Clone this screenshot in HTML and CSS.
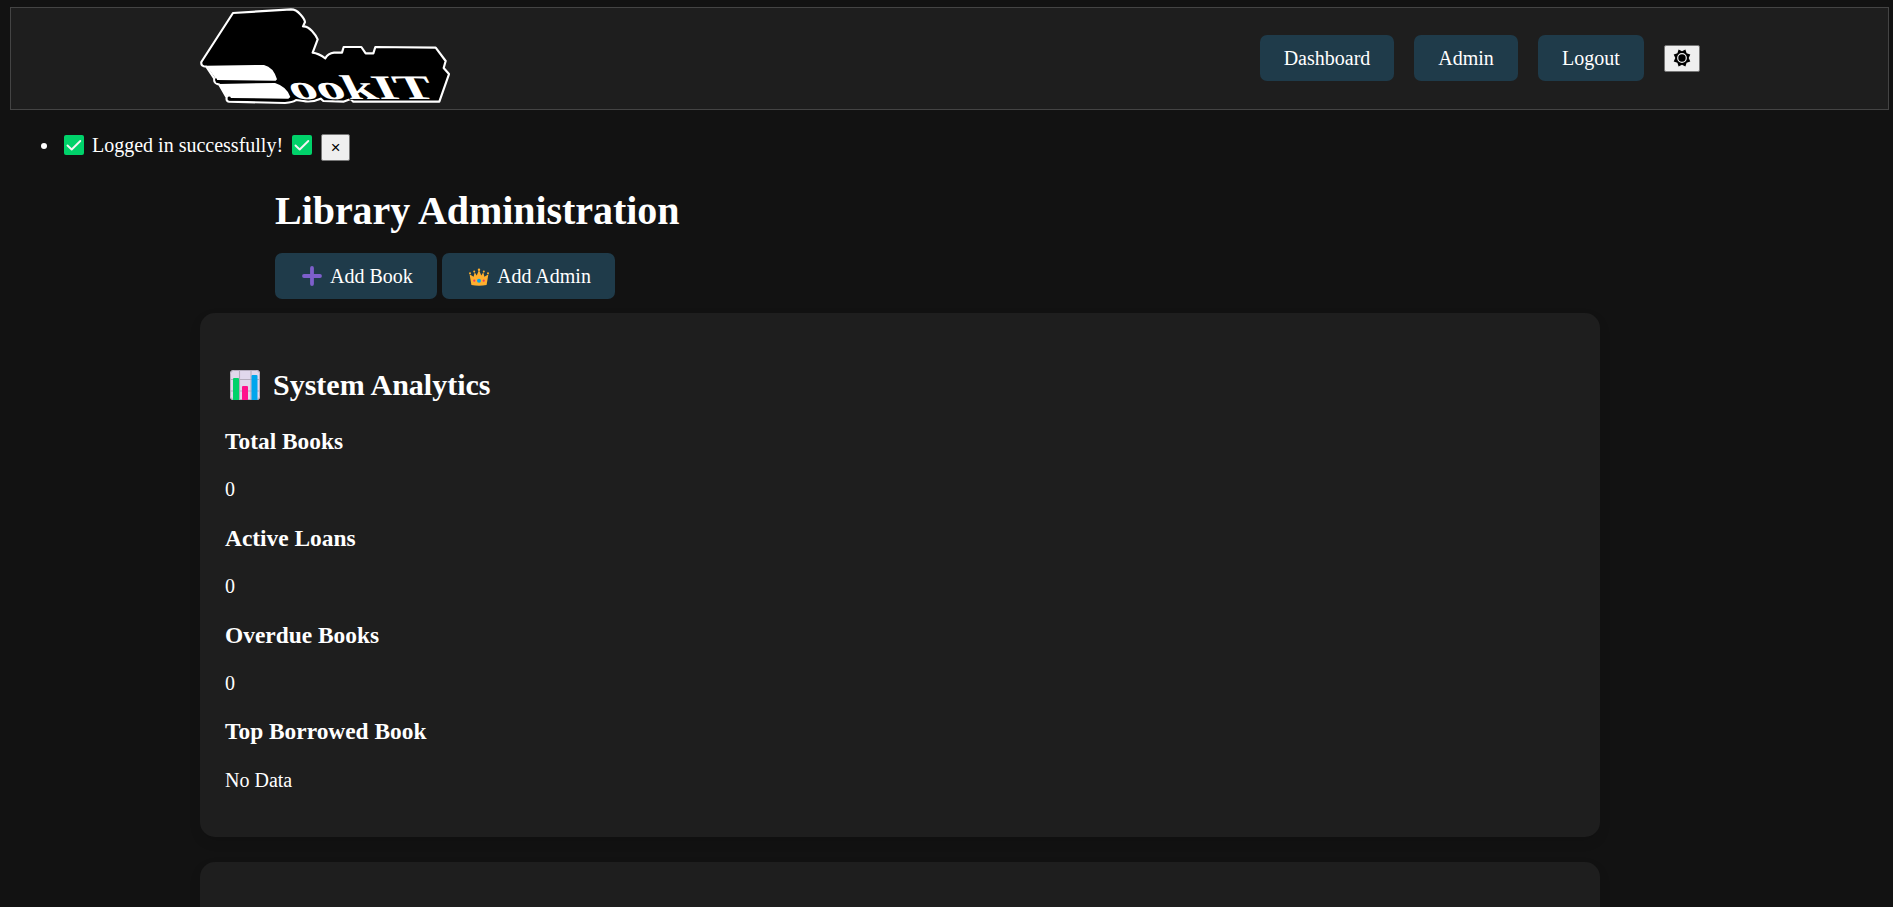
FILE: index.html
```html
<!DOCTYPE html>
<html lang="en">
<head>
<meta charset="utf-8">
<title>BookIT - Library Administration</title>
<link rel="stylesheet" href="styles.css">
</head>
<body>
<header class="header">
  <a class="logo" aria-label="BookIT">
    <svg width="250" height="100" viewBox="30 24 750 300">
      <path d="M129 39L303 28Q318 28 330 42Q344 57 345 66L339 79Q352 78 366 93Q378 106 383 118L368 158Q385 160 406 175Q414 160 432 158L456 158L461 141L514 141L527 160L550 160L556 141L737 143L767 183L761 204L777 222L748 305L490 305L482 297L460 305L400 303L392 296Q365 308 340 303L318 300Q310 307 285 309L117 305Q108 304 110 292L88 254Q70 250 73 236L49 200Q32 200 34 186Z" fill="#000" stroke="#fff" stroke-width="6.5" stroke-linejoin="round"/>
      <path d="M49 197L222 195Q250 201 261 238L257 242L80 240Z M86 252L255 249Q291 260 301 291L295 296L124 294Q114 288 112 292Z" fill="#fff"/>
      <path d="M78 236L80 246L258 246M118 290L120 299L285 301Q303 300 311 291" fill="none" stroke="#000" stroke-width="5"/>
      <text class="logo-text" transform="matrix(1.61 0 .5 1 311 296)">ookIT</text>
    </svg>
  </a>
  <nav class="nav">
    <a class="btn dash">Dashboard</a>
    <a class="btn admin">Admin</a>
    <a class="btn logout">Logout</a>
    <button class="theme" aria-label="Toggle theme">
      <svg width="18" height="18" viewBox="-9 -9 18 18">
        <path d="M-3.4-8.5L0-6.8L3.4-8.5L4.6-4.8L8.3-3.6L6.7 0L8.3 3.6L4.6 4.8L3.4 8.5L0 6.8L-3.4 8.5L-4.6 4.8L-8.3 3.6L-6.7 0L-8.3-3.6L-4.6-4.8Z" fill="#000"/>
        <circle r="4.3" fill="none" stroke="#efefef" stroke-width="1.2"/>
      </svg>
    </button>
  </nav>
</header>
<ul class="messages">
  <li class="message">
    <svg class="check" width="20" height="20" viewBox="0 0 20 20"><rect width="20" height="20" rx="2" fill="#00d26a"/><path d="M3.5 10.5L7.7 14.5L16.3 6" fill="none" stroke="#f4f4f4" stroke-width="1.9" stroke-linecap="round" stroke-linejoin="round"/></svg>
    <span class="message-text">Logged in successfully!</span>
    <svg class="check" width="20" height="20" viewBox="0 0 20 20"><rect width="20" height="20" rx="2" fill="#00d26a"/><path d="M3.5 10.5L7.7 14.5L16.3 6" fill="none" stroke="#f4f4f4" stroke-width="1.9" stroke-linecap="round" stroke-linejoin="round"/></svg>
    <button class="close">×</button>
  </li>
</ul>
<main>
  <section class="intro">
    <h1>Library Administration</h1>
    <div class="actions">
      <a class="btn add-book"><svg width="20" height="20" viewBox="0 0 20 20"><path d="M10 2V18M2 10H18" stroke="#7d5fcb" stroke-width="3.8" stroke-linecap="round"/></svg>Add Book</a>
      <a class="btn add-admin"><svg width="20" height="20" viewBox="0 0 20 20"><path d="M2.4 19L.6 8.2L4.6 10.7L5.7 6.2L7.7 9.6L10 4L12.3 9.6L14.3 6.2L15.4 10.7L19.4 8.2L17.6 19Q10 20.5 2.4 19Z" fill="#ffb02e"/><g fill="#ffb02e"><circle cx="1" cy="7.2" r="1"/><circle cx="5.2" cy="5.5" r="1"/><circle cx="10" cy="3.7" r="1.2"/><circle cx="14.8" cy="5.5" r="1"/><circle cx="19" cy="7.2" r="1"/></g><circle cx="10" cy="14.7" r="2" fill="#00a6ed"/><circle cx="5.3" cy="14.7" r="1.1" fill="#f43b5f"/><circle cx="14.7" cy="14.7" r="1.1" fill="#f43b5f"/></svg>Add Admin</a>
    </div>
  </section>
  <section class="card">
    <h2><svg width="30" height="30" viewBox="0 0 30 30"><rect width="30" height="30" rx="3.5" fill="#e1d8ec"/><path d="M0 9.5H30M0 21H30M9.5 0V30M21 0V30" stroke="#b4acbc" stroke-width="1.1"/><rect x=".5" y=".5" width="29" height="29" rx="3" fill="none" stroke="#b4acbc"/><path d="M3 30V9Q3 8 4 8H8Q9 8 9 9V30Z" fill="#00d26a"/><path d="M12 30V17Q12 16 13 16H17Q18 16 18 17V30Z" fill="#ff118c"/><path d="M21.5 30V6Q21.5 5 22.5 5H26.5Q27.5 5 27.5 6V30Z" fill="#00a6ed"/></svg><span>System Analytics</span></h2>
    <h3>Total Books</h3><p>0</p>
    <h3>Active Loans</h3><p>0</p>
    <h3>Overdue Books</h3><p>0</p>
    <h3>Top Borrowed Book</h3><p>No Data</p>
  </section>
  <section class="card card-next"></section>
</main>
</body>
</html>
```
FILE: styles.css
```css
* { box-sizing: border-box; }
html { background: #121212; }
body {
  margin: 0;
  height: 907px;
  padding: 7px 4px 0 10px;
  color: #fff;
  font: 20px/23px "Liberation Serif", "Times New Roman", serif;
}
svg { display: block; flex: none; }
.header {
  display: flex;
  justify-content: space-between;
  align-items: flex-start;
  height: 103px;
  padding: 0 188px 0 189px;
  border: 1px solid #444;
  background: #1e1e1e;
}
.logo-text {
  font: bold 103px "Liberation Serif", serif;
  fill: #fff;
  stroke: #000;
  stroke-width: 5px;
  paint-order: stroke;
}
.nav { display: flex; align-items: center; gap: 20px; margin-top: 27px; }
.btn {
  display: flex;
  align-items: center;
  justify-content: center;
  height: 46px;
  border-radius: 7px;
  background: #1f3b4a;
  color: #fff;
  white-space: nowrap;
}
.dash { width: 134px; }
.admin { width: 104px; }
.logout { width: 106px; }
.theme, .close {
  display: flex;
  justify-content: center;
  align-items: center;
  padding: 0;
  height: 27px;
  border: 1px solid #767676;
  border-radius: 2px;
  background: #efefef;
  color: #000;
}
.theme { width: 36px; margin-top: 1px; padding-bottom: 2px; }
.messages { list-style: none; margin: 24px 0 0; padding: 0 0 0 31px; }
.message { display: flex; height: 27px; }
.message::before {
  content: "";
  width: 6px;
  height: 6px;
  margin: 9px 17px 0 0;
  border-radius: 50%;
  background: #fff;
}
.check { margin-top: 1px; }
.message::before, .close { flex: none; }
.message-text { width: 190px; margin: 0 10px 0 8px; white-space: nowrap; }
.close { width: 29px; margin-left: 9px; font: 16.67px "Liberation Sans", Arial, sans-serif; }
.intro { padding: 27px 0 0 265px; }
h1 { margin: 0; font-size: 40px; line-height: 46px; letter-spacing: -0.05px; }
.actions { display: flex; gap: 5px; margin-top: 19px; }
.actions .btn { justify-content: flex-start; padding-left: 27px; gap: 8px; }
.add-book { width: 162px; }
.add-admin { width: 173px; }
.card {
  width: 1400px;
  margin: 14px 0 25px 190px;
  height: 524px;
  padding: 25px;
  border-radius: 15px;
  background: #1e1e1e;
  box-shadow: 0 5px 12px rgba(0, 0, 0, .1);
}
.card-next {
  height: 45px;
  margin-bottom: 0;
  border-radius: 15px 15px 0 0;
}
h2 {
  display: flex;
  gap: 13px;
  align-items: center;
  height: 40px;
  margin: 27px 0 23px;
  padding-left: 5px;
  font-size: 30px;
  line-height: 40px;
}
h3 { margin: 0 0 23.4px; font-size: 23.4px; line-height: 27px; }
p { margin: 0 0 23.4px; }
```
